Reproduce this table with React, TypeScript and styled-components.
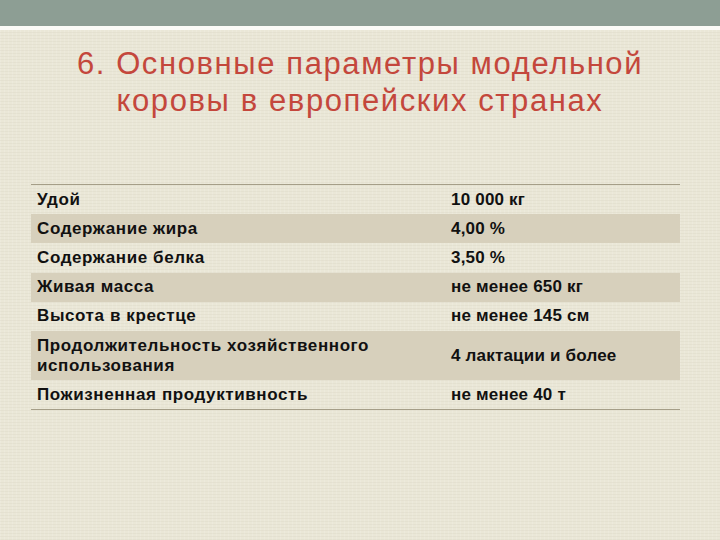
import styled, { createGlobalStyle } from "styled-components";

const GlobalStyle = createGlobalStyle`
  html, body {
    margin: 0;
    padding: 0;
  }
  body {
    font-family: "Liberation Sans", Arial, sans-serif;
  }
`;

const rows = [
  { label: "Удой", value: "10 000 кг", shaded: false },
  { label: "Содержание жира", value: "4,00 %", shaded: true },
  { label: "Содержание белка", value: "3,50 %", shaded: false },
  { label: "Живая масса", value: "не менее 650 кг", shaded: true },
  { label: "Высота в крестце", value: "не менее 145 см", shaded: false },
  {
    label: "Продолжительность хозяйственного использования",
    value: "4 лактации и более",
    shaded: true,
  },
  { label: "Пожизненная продуктивность", value: "не менее 40 т", shaded: false },
];

const Slide = styled.div`
  width: 720px;
  height: 540px;
  overflow: hidden;
  display: flex;
  flex-direction: column;
  background-color: #eae7d7;
  background-image:
    repeating-linear-gradient(0deg, rgba(120, 110, 80, 0.05) 0px, rgba(120, 110, 80, 0.05) 1px, transparent 1px, transparent 3px),
    repeating-linear-gradient(90deg, rgba(255, 255, 255, 0.12) 0px, rgba(255, 255, 255, 0.12) 1px, transparent 1px, transparent 4px);
`;

const TopBar = styled.div`
  height: 26px;
  background-color: #8d9e94;
  flex-shrink: 0;
`;

const Strip = styled.div`
  height: 4px;
  background-color: #fbfbf7;
  flex-shrink: 0;
`;

const Title = styled.h1`
  margin: 15px 0 0;
  font-family: "Liberation Sans", Arial, sans-serif;
  font-weight: normal;
  font-size: 31px;
  letter-spacing: 1.6px;
  line-height: 37px;
  color: #c4473c;
  text-align: center;
`;

const Table = styled.div`
  margin: 65px 40px 0 31px;
  border-top: 1px solid #a59e88;
  border-bottom: 1px solid #a59e88;
  display: flex;
  flex-direction: column;
`;

const Row = styled.div<{ $shaded: boolean }>`
  display: grid;
  grid-template-columns: 420px 1fr;
  align-items: center;
  background-color: ${(p) => (p.$shaded ? "#d7d0bc" : "transparent")};
`;

const Cell = styled.div`
  padding: 4.7px 6px 4.5px;
  font-size: 17px;
  letter-spacing: 0.6px;
  font-weight: bold;
  line-height: 20px;
  color: #111;
`;

const ValueCell = styled(Cell)`
  padding-left: 0;
  letter-spacing: 0.2px;
`;

export default function App() {
  return (
    <>
      <GlobalStyle />
      <Slide>
        <TopBar />
        <Strip />
        <Title>
          6. Основные параметры модельной
          <br />
          коровы в европейских странах
        </Title>
        <Table>
          {rows.map((row) => (
            <Row key={row.label} $shaded={row.shaded}>
              <Cell>{row.label}</Cell>
              <ValueCell>{row.value}</ValueCell>
            </Row>
          ))}
        </Table>
      </Slide>
    </>
  );
}
